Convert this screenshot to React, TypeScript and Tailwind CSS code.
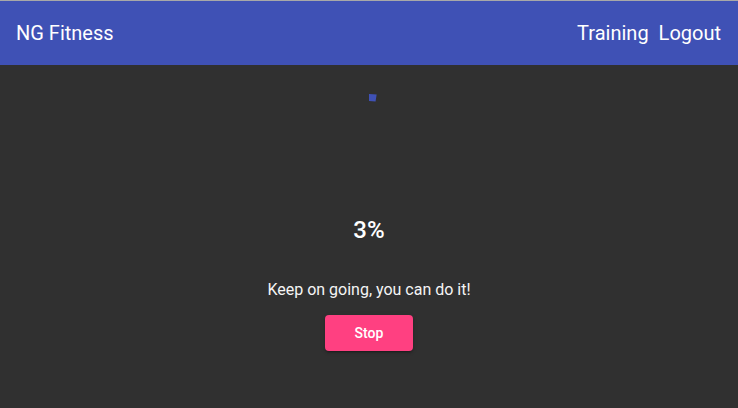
import React from 'react';

const progress = 3;

function Spinner() {
  const r = 46.5;
  const c = 2 * Math.PI * r;
  return (
    <svg width="100" height="100" viewBox="0 0 100 100" className="-rotate-90">
      <circle
        cx="50"
        cy="50"
        r={r}
        fill="none"
        stroke="#3f51b5"
        strokeWidth="7"
        strokeDasharray={`${(c * progress) / 100 - 1.6} ${c}`}
      />
    </svg>
  );
}

export default function App() {
  return (
    <div className="min-h-[408px] bg-[#303030] font-['Roboto',sans-serif] text-white">
      {/* Toolbar */}
      <div className="h-px bg-[#a8a8a8]" />
      <header className="flex h-16 items-center justify-between bg-[#3f51b5] pl-4 pr-[17px]">
        <span className="text-[20px]">NG Fitness</span>
        <nav className="flex gap-[10px] text-[20px]">
          <span>Training</span>
          <span>Logout</span>
        </nav>
      </header>

      {/* Current training */}
      <section className="flex flex-col items-center pt-[29px]">
        <Spinner />
        <h1 className="mt-[24px] text-[24px] font-medium leading-[24px]">{progress}%</h1>
        <p className="mt-[36px] text-[16px] leading-[24px] text-[#f5f5f5]">Keep on going, you can do it!</p>
        <button className="mt-[13px] h-9 w-[88px] rounded bg-[#ff4081] text-[14px] font-medium shadow-[0_3px_1px_-2px_rgba(0,0,0,0.2),0_2px_2px_0_rgba(0,0,0,0.14),0_1px_5px_0_rgba(0,0,0,0.12)]">
          Stop
        </button>
      </section>
    </div>
  );
}
